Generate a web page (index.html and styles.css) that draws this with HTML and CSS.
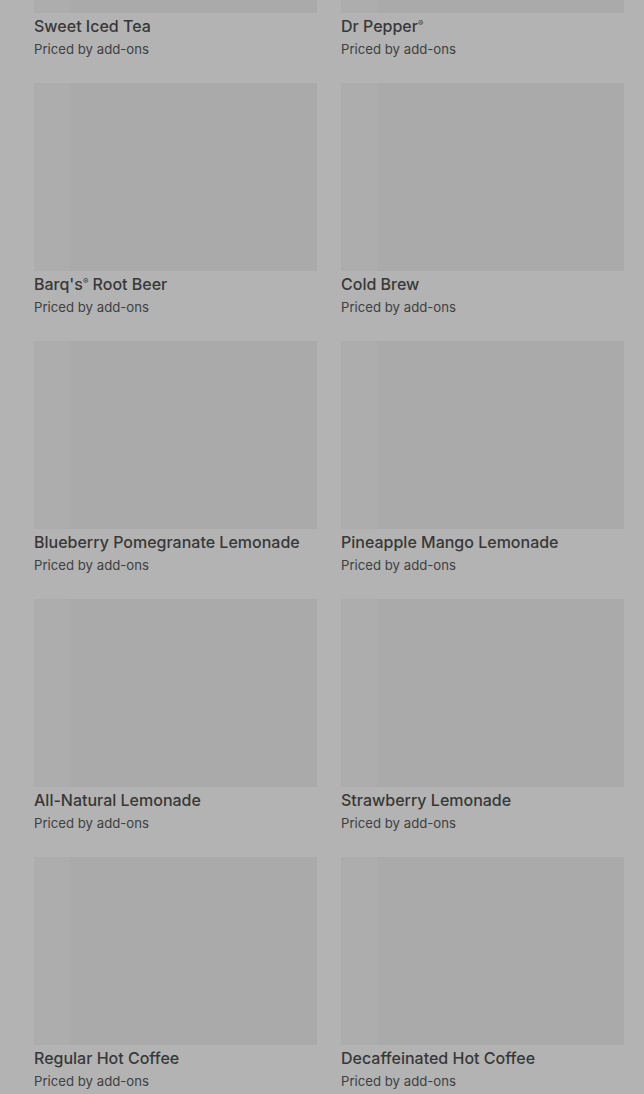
FILE: index.html
```html
<!DOCTYPE html>
<html lang="en">
<head>
    <meta charset="UTF-8">
    <meta name="viewport" content="width=device-width, initial-scale=1.0">
    <title>Drinks</title>
    <link rel="stylesheet" href="styles.css">
</head>
<body>
    <div class="menu-grid">
        <div class="item">
            <div class="item-image"></div>
            <h3 class="item-name">Sweet Iced Tea</h3>
            <p class="item-price">Priced by add-ons</p>
        </div>
        <div class="item">
            <div class="item-image"></div>
            <h3 class="item-name">Dr Pepper<sup>®</sup></h3>
            <p class="item-price">Priced by add-ons</p>
        </div>
        <div class="item">
            <div class="item-image"></div>
            <h3 class="item-name">Barq's<sup>®</sup> Root Beer</h3>
            <p class="item-price">Priced by add-ons</p>
        </div>
        <div class="item">
            <div class="item-image"></div>
            <h3 class="item-name">Cold Brew</h3>
            <p class="item-price">Priced by add-ons</p>
        </div>
        <div class="item">
            <div class="item-image"></div>
            <h3 class="item-name">Blueberry Pomegranate Lemonade</h3>
            <p class="item-price">Priced by add-ons</p>
        </div>
        <div class="item">
            <div class="item-image"></div>
            <h3 class="item-name">Pineapple Mango Lemonade</h3>
            <p class="item-price">Priced by add-ons</p>
        </div>
        <div class="item">
            <div class="item-image"></div>
            <h3 class="item-name">All-Natural Lemonade</h3>
            <p class="item-price">Priced by add-ons</p>
        </div>
        <div class="item">
            <div class="item-image"></div>
            <h3 class="item-name">Strawberry Lemonade</h3>
            <p class="item-price">Priced by add-ons</p>
        </div>
        <div class="item">
            <div class="item-image"></div>
            <h3 class="item-name">Regular Hot Coffee</h3>
            <p class="item-price">Priced by add-ons</p>
        </div>
        <div class="item">
            <div class="item-image"></div>
            <h3 class="item-name">Decaffeinated Hot Coffee</h3>
            <p class="item-price">Priced by add-ons</p>
        </div>
    </div>
</body>
</html>
```

FILE: styles.css
```css
body {
    font-family: Inter, Roboto, "Liberation Sans", sans-serif;
    background-color: #b3b3b3;
    margin: 0;
    padding: 0;
    color: #383838;
    overflow: hidden;
}

.menu-grid {
    display: grid;
    grid-template-columns: 283px 283px;
    column-gap: 24px;
    row-gap: 24px;
    padding: 0 20px 0 34px;
    margin-top: -175px;
}

.item-image {
    height: 188px;
    background: linear-gradient(90deg, #adadad 0, #adadad 36px, #aaaaaa 36px);
}

.item-name {
    margin: 3px 0 0;
    font-size: 16px;
    font-weight: 500;
    line-height: 20px;
}

.item-name sup {
    font-size: 8px;
    line-height: 0;
    vertical-align: 6px;
}

.item-price {
    margin: 3px 0 0;
    font-size: 13.2px;
    line-height: 20px;
    color: #404040;
}
```
